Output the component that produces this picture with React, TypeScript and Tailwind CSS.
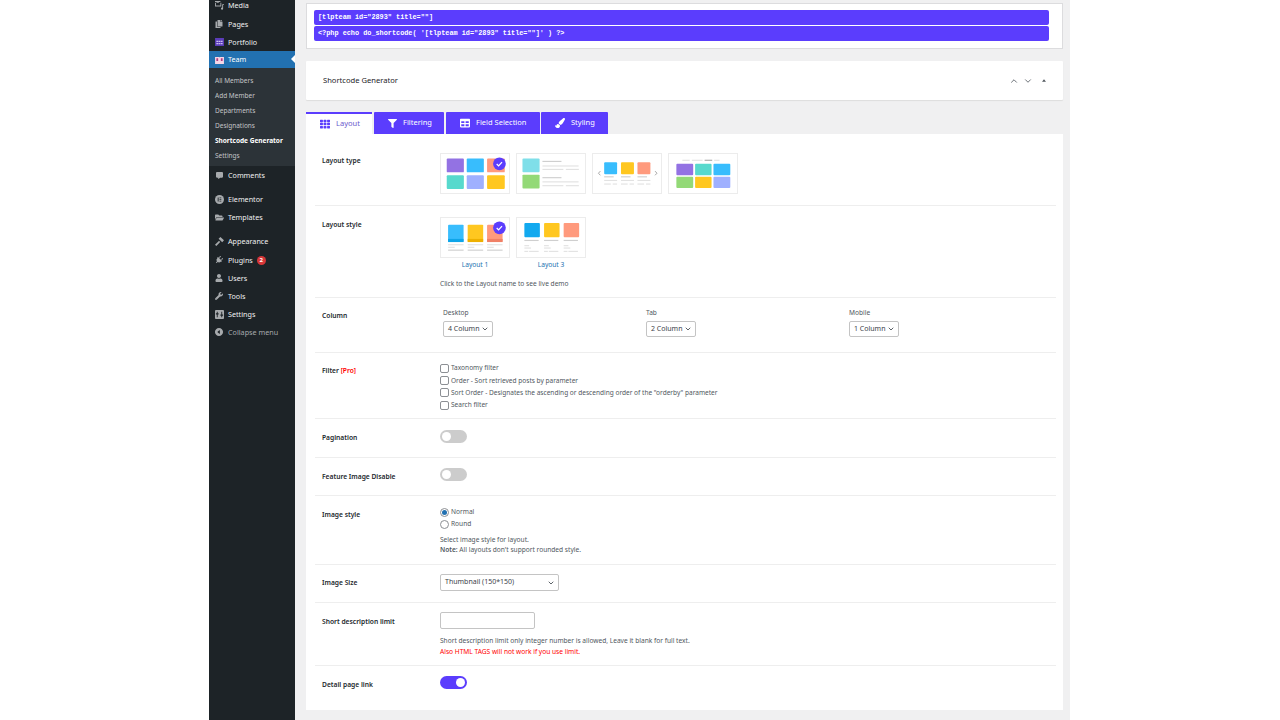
import { ReactNode } from "react";
import { FaCopy, FaFilter, FaFolderOpen, FaPaintBrush, FaPlug, FaTable, FaTh, FaUser, FaWrench, FaCommentAlt } from "react-icons/fa";
import { IoCaretBackCircle } from "react-icons/io5";
import { ChevronDown, ChevronUp } from "lucide-react";

const purple = "#6c3fd9";
const blue = "#38bdfd";
const orange = "#ff9a7d";
const teal = "#57d9cd";
const periwinkle = "#9fb0ff";
const yellow = "#ffc720";
const green = "#93d977";
const lineDark = "#cfcfcf";
const line = "#e2e2e2";

const Cell = ({ x, y, w, h, c }: { x: number; y: number; w: number; h: number; c: string }) => (
  <rect x={x} y={y} width={w} height={h} rx="1" fill={c} />
);

const Check = () => (
  <g>
    <circle cx="60.7" cy="10.3" r="6.7" fill="#5b3dfd" />
    <path d="M57.8 10.5l2 2 3.6-4" fill="none" stroke="#fff" strokeWidth="1.3" />
  </g>
);

const Thumb = ({ children }: { children: ReactNode }) => (
  <svg viewBox="0 0 70 41" className="h-[41px] w-[70px] border border-[#ececec] bg-white">
    {children}
  </svg>
);

const Bar = ({ x, y, w, c = line }: { x: number; y: number; w: number; c?: string }) => (
  <rect x={x} y={y} width={w} height="1.2" fill={c} />
);

const GridThumb = () => (
  <Thumb>
    <Cell x={5.3} y={4.7} w={18} h={14.6} c={purple + "bb"} />
    <Cell x={26.3} y={4.7} w={18} h={14.6} c={blue} />
    <Cell x={47.7} y={4.7} w={18.6} h={14.6} c={orange} />
    <Cell x={5.3} y={22.3} w={18} h={14.4} c={teal} />
    <Cell x={26.3} y={22.3} w={18} h={14.4} c={periwinkle} />
    <Cell x={47.7} y={22.3} w={18.6} h={14.4} c={yellow} />
    <Check />
  </Thumb>
);

const ListThumb = () => (
  <Thumb>
    <Cell x={5} y={4.7} w={18} h={14.4} c="#7fdfe9" />
    <Cell x={5} y={21.7} w={18} h={14.6} c={green} />
    <Bar x={26} y={7.2} w={20} c={lineDark} />
    <Bar x={26} y={12} w={38} />
    <Bar x={26} y={15.6} w={22} />
    <Bar x={50.6} y={15.6} w={13.7} />
    <Bar x={26} y={24.3} w={20} c={lineDark} />
    <Bar x={26} y={28.7} w={38} />
    <Bar x={26} y={32.7} w={22} />
    <Bar x={50.6} y={32.7} w={13.7} />
  </Thumb>
);

const SliderThumb = () => (
  <Thumb>
    <path d="M7 18l-2 2.2 2 2.2M64.5 18l2 2.2-2 2.2" fill="none" stroke="#999" strokeWidth="0.9" />
    {[
      [11, blue],
      [28.7, yellow],
      [46, orange],
    ].map(([x, c]) => (
      <g key={x as number}>
        <Cell x={x as number} y={8.7} w={13.6} h={12.6} c={c as string} />
        <Bar x={x as number} y={23.4} w={10} c={lineDark} />
        <Bar x={x as number} y={27.2} w={13.6} />
        <Bar x={x as number} y={31} w={7} />
        <Bar x={(x as number) + 9} y={31} w={4.6} />
      </g>
    ))}
  </Thumb>
);

const FilterThumb = () => (
  <Thumb>
    <Bar x={13.3} y={6} w={7.7} />
    <Bar x={23.3} y={6} w={11.3} />
    <Bar x={36.7} y={6} w={8} c="#aaaaaa" />
    <Bar x={46.7} y={6} w={5.7} />
    <Cell x={7} y={10.3} w={17.7} h={12} c={purple + "bb"} />
    <Cell x={26.7} y={10.3} w={17.3} h={12} c={teal} />
    <Cell x={46} y={10.3} w={17.7} h={12} c={blue} />
    <Cell x={7} y={24} w={17.7} h={11.7} c={green} />
    <Cell x={26.7} y={24} w={17.3} h={11.7} c={yellow} />
    <Cell x={46} y={24} w={17.7} h={11.7} c={periwinkle} />
  </Thumb>
);

const StyleOneThumb = () => (
  <Thumb>
    {[
      [6.7, blue, "#0ea5e9"],
      [27.3, yellow, "#eeb000"],
      [47.7, orange, "#f08066"],
    ].map(([x, c, d]) => (
      <g key={x as number}>
        <Cell x={x as number} y={7} w={16.3} h={18.3} c={c as string} />
        <rect x={x as number} y={22} width={16.3} height={3.3} fill={d as string} />
        <Bar x={x as number} y={27.5} w={16.3} />
        <Bar x={x as number} y={30.2} w={7} />
        <Bar x={x as number} y={33.2} w={16.3} c={lineDark} />
      </g>
    ))}
    <Check />
  </Thumb>
);

const StyleThreeThumb = () => (
  <Thumb>
    {[
      [7, "#12a9ef"],
      [27.7, yellow],
      [48.3, orange],
    ].map(([x, c]) => (
      <g key={x as number}>
        <Cell x={x as number} y={5.3} w={16.3} h={15} c={c as string} />
        <Bar x={x as number} y={23} w={15} c={lineDark} />
        <Bar x={x as number} y={28.5} w={5} />
        <Bar x={x as number} y={31} w={7} />
        <Bar x={x as number} y={34.5} w={4} />
        <Bar x={(x as number) + 5} y={34.5} w={10} />
      </g>
    ))}
  </Thumb>
);

const MenuItem = ({ icon, label, className = "text-[#f0f0f1]", after }: { icon: ReactNode; label: string; className?: string; after?: ReactNode }) => (
  <div className={`flex h-[18px] items-center text-[7.2px] ${className}`}>
    <span className="flex w-[19px] shrink-0 justify-center pl-[1px] text-[#a7aaad]">{icon}</span>
    <span>{label}</span>
    {after}
  </div>
);

const subItems = ["All Members", "Add Member", "Departments", "Designations", "Shortcode Generator", "Settings"];

const Sidebar = () => (
  <aside className="w-[86px] shrink-0 bg-[#1d2327]">
    <div className="-mt-[4px]">
      <MenuItem
        icon={
          <svg viewBox="0 0 10 10" className="h-[9px] w-[9px]" fill="#a7aaad">
            <path d="M0 0h6v1H4.500L4 2H2L1.500 1H0zM0 2h1v3h5V2h1v4H0z" />
            <path d="M8 3.500h2v1H9v4a1.200 1.200 0 1 1-1-1.200z" />
          </svg>
        }
        label="Media"
      />
      <div className="mt-px">
        <MenuItem icon={<FaCopy size={8} />} label="Pages" />
      </div>
      <MenuItem
        icon={
          <svg viewBox="0 0 10 9" className="h-[8px] w-[9px]">
            <rect width="10" height="9" fill="#5b3db8" />
            <path d="M1.500 3h2v1.500h-2zM4 3h2v1.500H4zM6.500 3h2v1.500h-2zM1.500 5.500h2V7h-2zM4 5.500h2V7H4zM6.500 5.500h2V7h-2z" fill="#cbbcf0" />
          </svg>
        }
        label="Portfolio"
      />
      <div className="relative">
        <div className="flex h-[17px] items-center bg-[#2271b1] text-[7.2px] text-white">
          <span className="flex w-[19px] shrink-0 justify-center pl-[1px]">
            <svg viewBox="0 0 10 9" className="h-[8px] w-[9px]">
              <path d="M0 1h4.500l.5.600.5-.6H10v8H0z" fill="#f6d7e6" />
              <path d="M1.500 2.500h2v3h-2zM6.500 2.500h2v3h-2z" fill="#b1387f" />
            </svg>
          </span>
          <span>Team</span>
        </div>
        <span className="absolute right-0 top-[4px] h-0 w-0 border-y-[4px] border-r-[4px] border-y-transparent border-r-white" />
      </div>
      <div className="bg-[#2c3338] pb-[3px] pt-[5px]">
        {subItems.map((item) => (
          <div
            key={item}
            className={`flex h-[15px] items-center pl-[6px] text-[6.5px] ${item === "Shortcode Generator" ? "font-bold text-white" : "text-[#c3c4c7]"}`}
          >
            {item}
          </div>
        ))}
      </div>
      <MenuItem icon={<FaCommentAlt size={7} />} label="Comments" />
      <div className="mt-[6px]">
        <MenuItem
          icon={
            <svg viewBox="0 0 10 10" className="h-[9px] w-[9px]">
              <circle cx="5" cy="5" r="5" fill="#a7aaad" />
              <path d="M3 2.800h1v4.400H3zM5 2.800h2v.9H5zM5 4.600h2v.9H5zM5 6.300h2v.9H5z" fill="#1d2327" />
            </svg>
          }
          label="Elementor"
        />
        <MenuItem icon={<FaFolderOpen size={9} />} label="Templates" />
      </div>
      <div className="mt-[6px]">
        <MenuItem
          icon={
            <svg viewBox="0 0 10 10" className="h-[9px] w-[9px]" fill="#a7aaad">
              <path d="M6 0l4 3.500-2 2.200L4 2z" />
              <path d="M4.500 4.200l1.300 1.300L1.500 10 0 8.500z" />
            </svg>
          }
          label="Appearance"
        />
        <MenuItem
          icon={<FaPlug size={8} className="rotate-45" />}
          label="Plugins"
          className="mt-px text-[#f0f0f1]"
          after={<span className="ml-[4px] flex h-[9px] w-[9px] items-center justify-center rounded-full bg-[#d63638] text-[6px] font-bold text-white">2</span>}
        />
        <MenuItem icon={<FaUser size={8} />} label="Users" />
        <MenuItem icon={<FaWrench size={8} />} label="Tools" />
        <MenuItem
          icon={
            <svg viewBox="0 0 10 10" className="h-[9px] w-[9px]">
              <rect width="10" height="10" rx="1" fill="#a7aaad" />
              <path d="M2 2h1v1.500h1V5H3v3H2V5H1V3.500h1zM7 2h1v3h1v1.500H8V8H7V6.500H6V5h1z" fill="#1d2327" />
            </svg>
          }
          label="Settings"
        />
        <MenuItem icon={<IoCaretBackCircle size={10} />} label="Collapse menu" className="text-[#a7aaad]" />
      </div>
    </div>
  </aside>
);

const Tab = ({ icon, label, className }: { icon: ReactNode; label: string; className: string }) => (
  <div className={`flex h-[22px] items-center gap-[6px] rounded-t-[1px] bg-[#5b3dfd] pl-[14px] text-[7.5px] text-white ${className}`}>
    {icon}
    {label}
  </div>
);

const Row = ({ label, className, labelClass = "", children, last }: { label: ReactNode; className: string; labelClass?: string; children?: ReactNode; last?: boolean }) => (
  <div className={`flex pl-[7px] ${last ? "" : "border-b border-[#eeeeee]"} ${className}`}>
    <div className={`w-[118px] shrink-0 text-[6.7px] font-semibold leading-[10px] text-[#23282d] ${labelClass}`}>{label}</div>
    <div className="min-w-0 flex-1">{children}</div>
  </div>
);

const Select = ({ text, className }: { text: string; className: string }) => (
  <div className={`flex h-[16px] items-center justify-between whitespace-nowrap rounded-[2px] border border-[#c4c4c4] bg-white pl-[4px] pr-[3px] text-[7px] text-[#3c434a] ${className}`}>
    <span>{text}</span>
    <ChevronDown size={8} strokeWidth={2.5} />
  </div>
);

const Toggle = ({ on }: { on?: boolean }) => (
  <div className={`flex h-[13px] w-[27px] items-center rounded-full px-[2px] ${on ? "justify-end bg-[#5b3dfd]" : "justify-start bg-[#cccccc]"}`}>
    <span className="h-[9px] w-[9px] rounded-full bg-white" />
  </div>
);

const filters = [
  "Taxonomy filter",
  "Order - Sort retrieved posts by parameter",
  'Sort Order - Designates the ascending or descending order of the "orderby" parameter',
  "Search filter",
];

const columns = [
  { name: "Desktop", value: "4 Column" },
  { name: "Tab", value: "2 Column" },
  { name: "Mobile", value: "1 Column" },
];

export default function App() {
  return (
    <div className="flex h-[720px] w-[1280px] overflow-hidden bg-white pl-[209px] pr-[210px] font-['Noto_Sans',sans-serif]">
      <Sidebar />
      <main className="flex-1 bg-[#f0f0f1] pl-[11px] pr-[7px] pt-[3px]">
        <div className="h-[46px] border border-[#dcdcde] bg-white pl-[7px] pr-[13px] pt-[6px] font-['Liberation_Mono',monospace] text-[6.85px] font-bold text-white">
          <div className="flex h-[15px] items-center rounded-[2px] bg-[#5b3dfd] pl-[4px]">{'[tlpteam id="2893" title=""]'}</div>
          <div className="mt-px flex h-[15px] items-center rounded-[2px] bg-[#5b3dfd] pl-[4px]">{`<?php echo do_shortcode( '[tlpteam id="2893" title=""]' ) ?>`}</div>
        </div>

        <div className="mt-[12px] flex h-[39px] items-center justify-between rounded-[1px] bg-white pl-[17px] pr-[17px] shadow-[0_1px_1px_#dddddd]">
          <span className="text-[7.6px] text-[#1d2327]">Shortcode Generator</span>
          <div className="flex items-center text-[#50575e]">
            <ChevronUp size={10} />
            <ChevronDown size={10} className="ml-[4px]" />
            <svg viewBox="0 0 6 4" className="ml-[9px] h-[3px] w-[4px]">
              <path d="M3 0l3 4H0z" fill="#50575e" />
            </svg>
          </div>
        </div>

        <div className="mt-[12px] flex items-end">
          <div className="flex h-[22px] w-[66px] items-center gap-[6px] border-t-2 border-[#5b3dfd] bg-white pl-[14px] text-[7.5px] text-[#6a5acd]">
            <FaTh size={10} className="text-[#5b3dfd]" />
            Layout
          </div>
          <Tab icon={<FaFilter size={9} />} label="Filtering" className="ml-[2px] w-[70px]" />
          <Tab icon={<FaTable size={10} />} label="Field Selection" className="ml-[2px] w-[94px]" />
          <Tab icon={<FaPaintBrush size={10} />} label="Styling" className="ml-px w-[67px]" />
        </div>

        <section className="h-[576px] bg-white pl-[9px] pr-[7px]">
          <Row label="Layout type" className="h-[72px] pt-[19px]" labelClass="pt-[3px]">
            <div className="flex gap-[6px]">
              <GridThumb />
              <ListThumb />
              <SliderThumb />
              <FilterThumb />
            </div>
          </Row>

          <Row label="Layout style" className="h-[92px] pt-[11px]" labelClass="pt-[3px]">
            <div className="flex gap-[6px]">
              <div className="w-[70px] text-center">
                <StyleOneThumb />
                <div className="mt-[2px] text-[6.6px] leading-[10px] text-[#2271b1]">Layout 1</div>
              </div>
              <div className="w-[70px] text-center">
                <StyleThreeThumb />
                <div className="mt-[2px] text-[6.6px] leading-[10px] text-[#2271b1]">Layout 3</div>
              </div>
            </div>
            <p className="mt-[9px] text-[6.6px] leading-[10px] text-[#50575e]">Click to the Layout name to see live demo</p>
          </Row>

          <Row label="Column" className="h-[55px] pt-[10px]" labelClass="pt-[3px]">
            <div className="flex">
              {columns.map((col) => (
                <div key={col.name} className="w-[203px] pl-[3px]">
                  <div className="text-[6.6px] leading-[10px] text-[#50575e]">{col.name}</div>
                  <Select text={col.value} className="mt-[3px] w-[50px]" />
                </div>
              ))}
            </div>
          </Row>

          <Row
            label={
              <>
                Filter <span className="text-[#ff0000]">[Pro]</span>
              </>
            }
            className="h-[66px] pt-[9px]"
            labelClass="pt-[4px]"
          >
            {filters.map((f) => (
              <label key={f} className="flex h-[12.3px] items-center gap-[2px] text-[6.55px] text-[#50575e]">
                <span className="h-[9px] w-[9px] shrink-0 rounded-[2px] border border-[#8c8f94] bg-white" />
                {f}
              </label>
            ))}
          </Row>

          <Row label="Pagination" className="h-[39px] pt-[11px]" labelClass="pt-[3px]">
            <Toggle />
          </Row>

          <Row label="Feature Image Disable" className="h-[38px] pt-[10px]" labelClass="pt-[4px]">
            <Toggle />
          </Row>

          <Row label="Image style" className="h-[69px] pt-[10px]" labelClass="pt-[4px]">
            <div className="flex h-[12px] items-center gap-[2px] text-[6.6px] text-[#50575e]">
              <span className="flex h-[9px] w-[9px] items-center justify-center rounded-full border border-[#8c8f94]">
                <span className="h-[5px] w-[5px] rounded-full bg-[#2271b1]" />
              </span>
              Normal
            </div>
            <div className="flex h-[12px] items-center gap-[2px] text-[6.6px] text-[#50575e]">
              <span className="h-[9px] w-[9px] rounded-full border border-[#8c8f94]" />
              Round
            </div>
            <p className="mt-[5px] text-[6.6px] leading-[10px] text-[#50575e]">Select image style for layout.</p>
            <p className="text-[6.6px] leading-[10.5px] text-[#50575e]">
              <span className="font-semibold">Note:</span> All layouts don't support rounded style.
            </p>
          </Row>

          <Row label="Image Size" className="h-[38px] pt-[9px]" labelClass="pt-[4px]">
            <Select text="Thumbnail (150*150)" className="h-[17px] w-[119px]" />
          </Row>

          <Row label="Short description limit" className="h-[63px] pt-[9px]" labelClass="pt-[5px]">
            <div className="h-[17px] w-[95px] rounded-[2px] border border-[#c4c4c4] bg-white" />
            <p className="mt-[7px] text-[6.6px] leading-[10px] text-[#50575e]">Short description limit only integer number is allowed, Leave it blank for full text.</p>
            <p className="text-[6.6px] leading-[11px] text-[#ff0000]">Also HTML TAGS will not work if you use limit.</p>
          </Row>

          <Row label="Detail page link" className="h-[44px] pt-[10px]" labelClass="pt-[4px]" last>
            <Toggle on />
          </Row>
        </section>
      </main>
    </div>
  );
}
